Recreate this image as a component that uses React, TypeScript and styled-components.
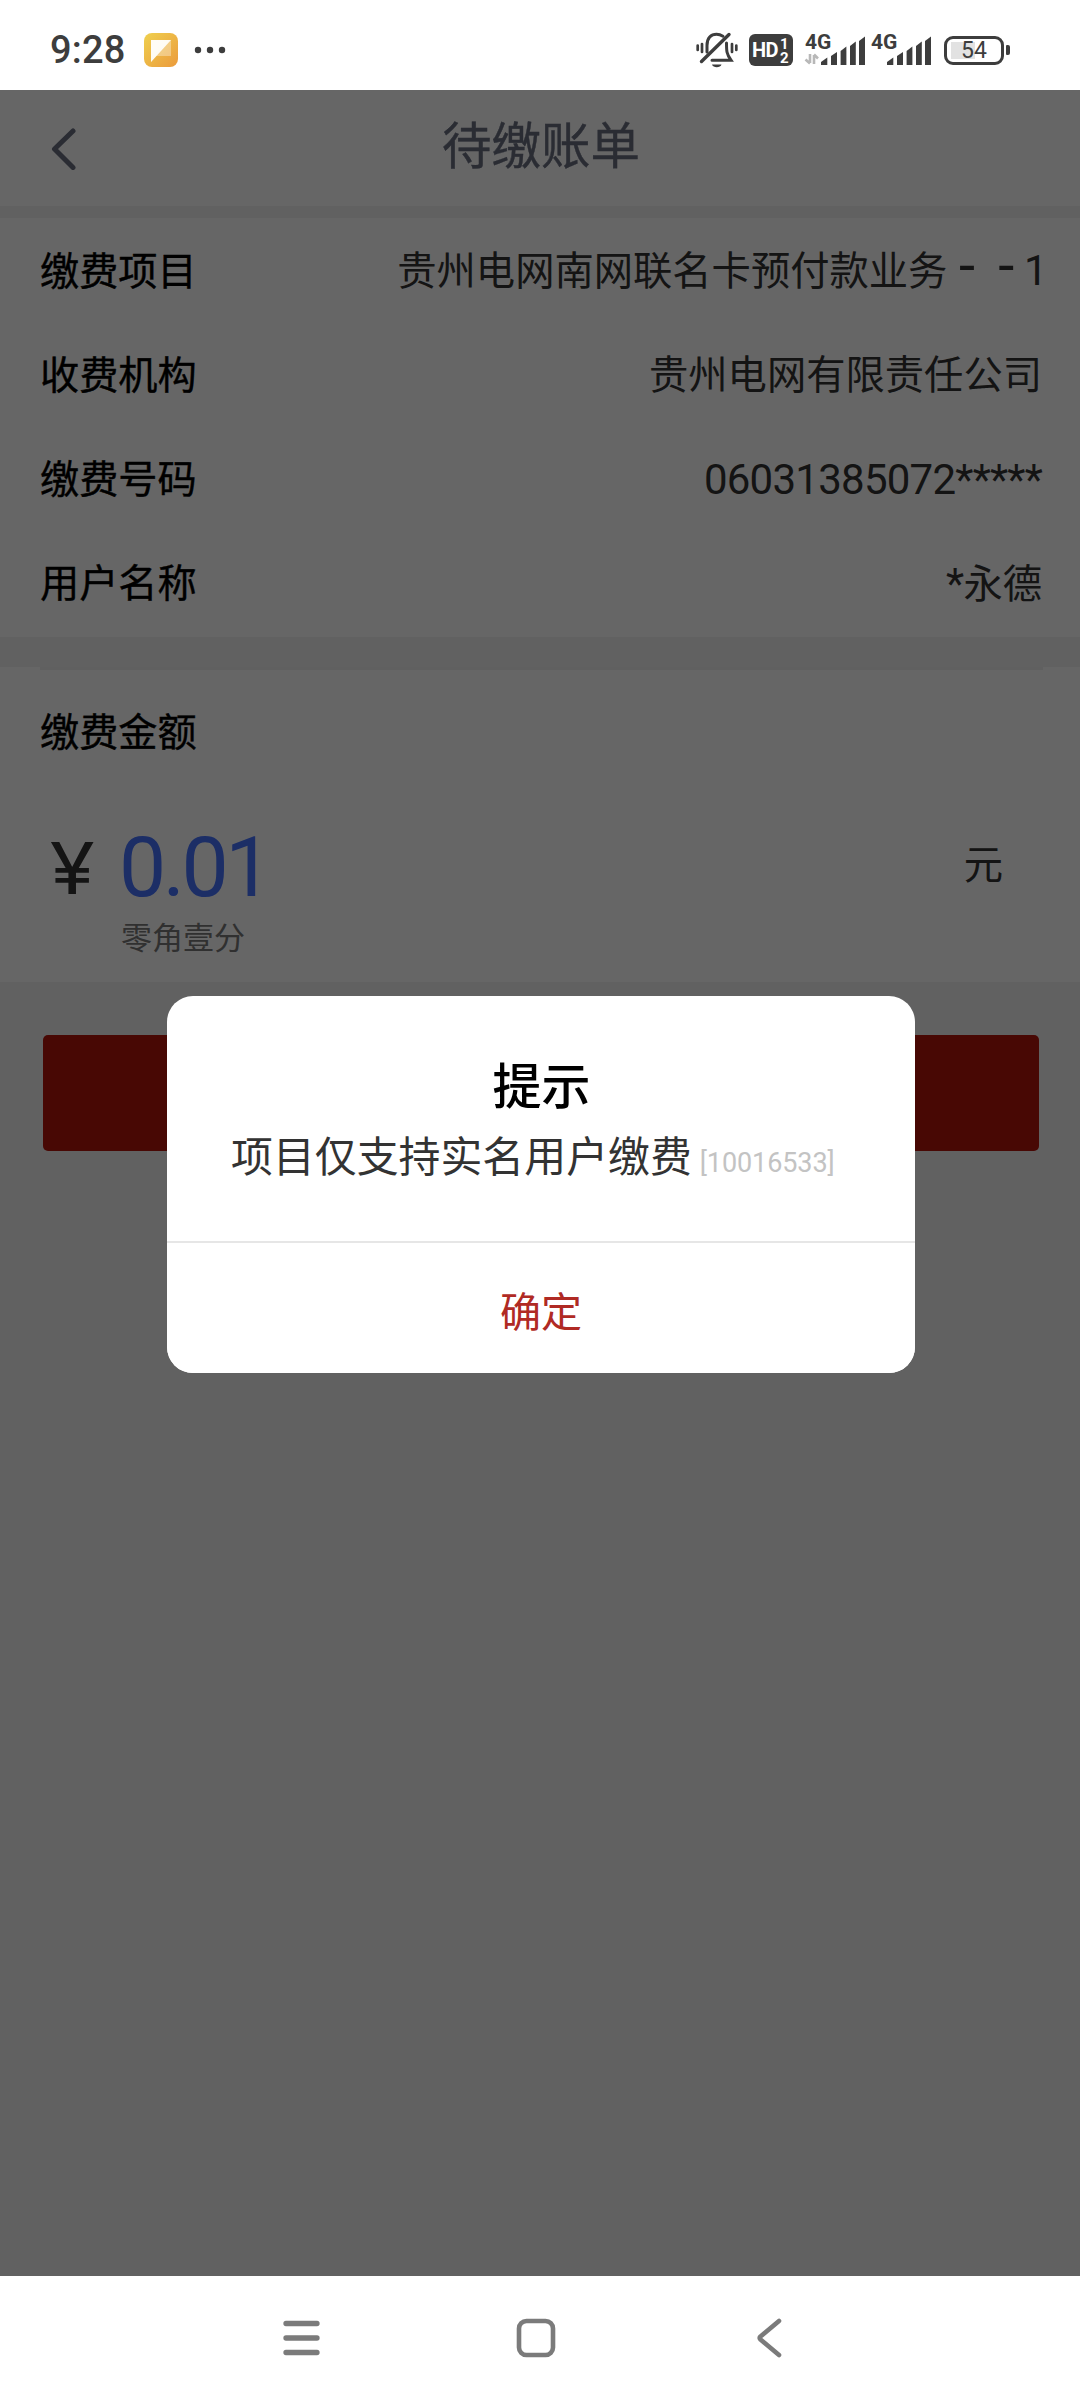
import React from "react";
import styled, { createGlobalStyle } from "styled-components";

const GlobalStyle = createGlobalStyle`
  * { box-sizing: border-box; }
  html, body { margin: 0; padding: 0; background: #fff; }
  body { font-family: Roboto, "Noto Sans CJK SC", sans-serif; overflow-x: hidden; }
`;

const Phone = styled.div`
  width: 1080px;
  height: 2400px;
  display: flex;
  flex-direction: column;
  background: #fff;
`;

/* ---------- status bar ---------- */

const StatusBar = styled.header`
  height: 90px;
  flex: none;
  display: flex;
  justify-content: space-between;
  padding: 10px 70px 0 50px;
  color: #3d3d3d;
`;

const StatusGroup = styled.div`
  display: flex;
  align-items: center;
  height: 80px;
`;

const Clock = styled.span`
  font-size: 38px;
  font-weight: 500;
  line-height: 80px;
  width: 94px;
  letter-spacing: 0.2px;
`;

const Dots = styled.svg`
  margin-left: 15px;
`;

const HdBadge = styled.div`
  display: flex;
  align-items: center;
  width: 44px;
  height: 32px;
  margin-left: 11px;
  padding-left: 3px;
  border-radius: 6px;
  background: #3d3d3d;
  color: #fff;
  font-size: 20px;
  font-weight: 700;
  letter-spacing: -0.6px;
`;

const HdLines = styled.span`
  display: flex;
  flex-direction: column;
  font-size: 15px;
  line-height: 14px;
  margin-left: 2px;
  padding-top: 1px;
`;

const Signal = styled.div<{ $gap: number }>`
  display: grid;
  grid-template-columns: 17px 45px;
  grid-template-rows: 17px 16px;
  margin-left: ${(p) => p.$gap}px;
`;

const NetType = styled.span`
  grid-column: 1;
  grid-row: 1;
  font-size: 21px;
  line-height: 17px;
  font-weight: 700;
  white-space: nowrap;
  padding-left: 1px;
`;

const Bars = styled.svg`
  grid-column: 2;
  grid-row: 1 / 3;
`;

const Arrows = styled.svg`
  grid-column: 1;
  grid-row: 2;
`;

const Battery = styled.div`
  display: flex;
  align-items: center;
  margin-left: 12px;
`;

const BatteryBody = styled.div`
  width: 60px;
  height: 29px;
  border: 3px solid #3d3d3d;
  border-radius: 9px;
  font-size: 23px;
  line-height: 24px;
  text-align: center;
  background: linear-gradient(#e2e2e2, #e2e2e2) 4px center / 24px 17px no-repeat;
`;

const BatteryTip = styled.div`
  width: 4px;
  height: 10px;
  margin-left: 2px;
  border-radius: 1px 2px 2px 1px;
  background: #3d3d3d;
`;

/* ---------- bill page ---------- */

const Page = styled.main`
  position: relative;
  flex: 1;
  display: flex;
  flex-direction: column;
  background: #f3f3f3;
`;

const TitleBar = styled.div`
  display: grid;
  grid-template-columns: 120px 1fr 120px;
  height: 116px;
  margin-bottom: 12px;
  background: #fff;
`;

const BackIcon = styled.svg`
  margin: 38px 0 0 48px;
`;

const Title = styled.h1`
  margin: 0 0 0 2px;
  text-align: center;
  font-size: 49.5px;
  line-height: 115px;
  font-weight: 400;
  -webkit-text-stroke: 0.4px;
  color: #6a6f80;
`;

const InfoCard = styled.section`
  height: 419px;
  margin-bottom: 30px;
  padding: 2px 38px 0 40px;
  background: #fff;
`;

const Row = styled.div`
  display: flex;
  justify-content: space-between;
  height: 104px;
  line-height: 104px;
  font-size: 39.3px;
`;

const Label = styled.span`
  font-size: 39.2px;
  font-weight: 400;
  -webkit-text-stroke: 0.4px;
  color: #000;
`;

const Value = styled.span`
  color: #333;
`;

const Digits = styled.span`
  font-size: 42px;
  letter-spacing: -0.75px;
`;

const Dash = styled.span`
  display: inline-block;
  width: 39.3px;
  text-align: center;
  font-size: 58px;
  line-height: 40px;
`;

const Suffix = styled.span`
  display: inline-block;
  width: 16px;
  font-size: 42px;
  line-height: 40px;
  text-indent: -2px;
`;

const AmountCard = styled.section`
  height: 315px;
  padding: 0 37px 0 40px;
  background: #fff;
`;

const AmountHead = styled.div`
  height: 128px;
  border-top: 3px solid #f1f1f1;
  line-height: 127px;
`;

const AmountRow = styled.div`
  display: flex;
  height: 120px;
  padding: 0 40px 0 10px;
  line-height: 146px;
  color: #333;
`;

const Yen = styled.span`
  width: 71px;
  font-family: Inter, Roboto, sans-serif;
  font-size: 71px;
  transform: scaleX(1.15);
  transform-origin: 2px center;
`;

const Amount = styled.span`
  flex: 1;
  font-size: 84px;
  letter-spacing: -3.4px;
  margin-left: -2px;
  color: #4673ff;
`;

const Unit = styled.span`
  font-size: 39.3px;
  line-height: 143px;
`;

const AmountWords = styled.div`
  padding-left: 81px;
  font-size: 31px;
  line-height: 48px;
  color: #787878;
`;

const PayButton = styled.button`
  height: 116px;
  margin: 53px 41px 0 43px;
  border: 0;
  border-radius: 5px;
  background: #b4140a;
`;

/* ---------- dialog ---------- */

const Mask = styled.div`
  position: absolute;
  inset: 0;
  display: flex;
  flex-direction: column;
  align-items: center;
  background: rgba(0, 0, 0, 0.6);
`;

const Dialog = styled.div`
  display: flex;
  flex-direction: column;
  width: 748px;
  height: 377px;
  margin: 906px 0 0 2px;
  border-radius: 26px;
  overflow: hidden;
  background: #fff;
`;

const DialogBody = styled.div`
  height: 245px;
  padding: 57px 0 0 64px;
`;

const DialogTitle = styled.h2`
  margin: 0 63px 0 0;
  text-align: center;
  font-size: 49px;
  line-height: 70px;
  font-weight: 500;
  color: #000;
`;

const Message = styled.p`
  margin: 0;
  white-space: nowrap;
  font-size: 41.9px;
  line-height: 70px;
  color: #333;
`;

const Code = styled.span`
  margin-left: 8px;
  font-size: 27px;
  letter-spacing: -0.1px;
  color: #c3c3c3;
`;

const Confirm = styled.button`
  flex: 1;
  border: 0;
  border-top: 2px solid #e6e6e6;
  background: #fff;
  padding: 1px 0 0;
  font-family: inherit;
  font-size: 41px;
  color: #b02a24;
`;

/* ---------- navigation bar ---------- */

const NavBar = styled.nav`
  flex: none;
  height: 124px;
  display: flex;
  align-items: center;
  padding-left: 280px;
  background: #fff;
`;

const HomeIcon = styled.svg`
  margin: 0 197px 0 193px;
`;

function SignalBars({ gap, data }: { gap: number; data?: boolean }) {
  return (
    <Signal $gap={gap}>
      <NetType>4G</NetType>
      <Bars width="45" height="33" viewBox="0 0 45 33">
        <g fill="#3d3d3d">
          <path d="M0 31V28L6.3 23.5V31z" />
          <path d="M10 31V22L16 18V31z" />
          <path d="M19.6 31V17L25.4 12.5V31z" />
          <path d="M29 31V12L34.8 7.5V31z" />
          <path d="M38 31V7L44 2.5V31z" />
        </g>
      </Bars>
      {data && (
        <Arrows width="17" height="16" viewBox="0 0 17 16">
          <path d="M6 3V12M6 12.5L1.5 8.5M10 13V4M10 3.5L14 7.5" fill="none" stroke="#b8b8b8" strokeWidth="2.6" />
        </Arrows>
      )}
    </Signal>
  );
}

export default function App() {
  return (
    <Phone>
      <GlobalStyle />
      <StatusBar>
        <StatusGroup>
          <Clock>9:28</Clock>
          <svg width="34" height="34" viewBox="0 0 34 34">
            <defs>
              <linearGradient id="note" x1="0" y1="0" x2="1" y2="1">
                <stop offset="0" stopColor="#efd04e" />
                <stop offset="1" stopColor="#eb9a3c" />
              </linearGradient>
            </defs>
            <rect width="34" height="34" rx="8" fill="url(#note)" />
            <path d="M7 7H27V23H12L7 29z" fill="#fff" opacity=".35" />
            <path d="M7 7H27L7 29z" fill="#fff" opacity=".92" />
          </svg>
          <Dots width="34" height="8" viewBox="0 0 34 8">
            <g fill="#3d3d3d">
              <circle cx="5" cy="4" r="3.2" />
              <circle cx="17" cy="4" r="3.2" />
              <circle cx="29" cy="4" r="3.2" />
            </g>
          </Dots>
        </StatusGroup>
        <StatusGroup>
          <svg width="42" height="36" viewBox="0 0 42 36" fill="none" stroke="#3d3d3d" strokeWidth="3" strokeLinecap="round">
            <path d="M5.5 29.5L33 2.5" strokeWidth="3.4" />
            <path d="M11 20V13.5C11 6 15 2.3 20.5 2.3C23 2.3 25 3 27 4.2" />
            <path d="M30.5 11C30.5 19 30.5 22 35 28.2H16" />
            <path d="M16 32.5H25.5C24.5 36 17 36 16 32.5z" fill="#3d3d3d" stroke="none" />
            <path d="M1.7 13.5V18M6 12V20M36 12V20M40.3 13.5V18" strokeWidth="2.7" />
          </svg>
          <HdBadge>
            HD
            <HdLines>
              <span>1</span>
              <span>2</span>
            </HdLines>
          </HdBadge>
          <SignalBars gap={11} data />
          <SignalBars gap={4} />
          <Battery>
            <BatteryBody>54</BatteryBody>
            <BatteryTip />
          </Battery>
        </StatusGroup>
      </StatusBar>

      <Page>
        <TitleBar>
          <BackIcon width="32" height="42" viewBox="0 0 32 42">
            <path d="M25 3L6.5 21L25 39.5" fill="none" stroke="#6a6f80" strokeWidth="5" strokeLinecap="round" strokeLinejoin="round" />
          </BackIcon>
          <Title>待缴账单</Title>
        </TitleBar>

        <InfoCard>
          <Row>
            <Label>缴费项目</Label>
            <Value>
              贵州电网南网联名卡预付款业务<Dash>-</Dash><Dash>-</Dash><Suffix>1</Suffix>
            </Value>
          </Row>
          <Row>
            <Label>收费机构</Label>
            <Value>贵州电网有限责任公司</Value>
          </Row>
          <Row>
            <Label>缴费号码</Label>
            <Value><Digits>06031385072*****</Digits></Value>
          </Row>
          <Row>
            <Label>用户名称</Label>
            <Value><Digits>*</Digits>永德</Value>
          </Row>
        </InfoCard>

        <AmountCard>
          <AmountHead>
            <Label>缴费金额</Label>
          </AmountHead>
          <AmountRow>
            <Yen>¥</Yen>
            <Amount>0.01</Amount>
            <Unit>元</Unit>
          </AmountRow>
          <AmountWords>零角壹分</AmountWords>
        </AmountCard>

        <PayButton aria-label="缴费" />

        <Mask>
          <Dialog>
            <DialogBody>
              <DialogTitle>提示</DialogTitle>
              <Message>
                项目仅支持实名用户缴费<Code>[10016533]</Code>
              </Message>
            </DialogBody>
            <Confirm>确定</Confirm>
          </Dialog>
        </Mask>
      </Page>

      <NavBar>
        <svg width="42" height="42" viewBox="0 0 42 42" stroke="#7b7b7b" strokeWidth="5.3" strokeLinecap="round">
          <path d="M6 6.5H37M6 21H37M6 35.5H37" />
        </svg>
        <HomeIcon width="42" height="42" viewBox="0 0 42 42" fill="none" stroke="#7b7b7b" strokeWidth="4.6">
          <rect x="4" y="4" width="34" height="34" rx="7.5" />
        </HomeIcon>
        <svg width="30" height="42" viewBox="0 0 30 42" fill="none" stroke="#7b7b7b" strokeWidth="4.6" strokeLinecap="round" strokeLinejoin="round">
          <path d="M25 4L6.5 19.5Q5 21 6.5 22.5L25 38" />
        </svg>
      </NavBar>
    </Phone>
  );
}
